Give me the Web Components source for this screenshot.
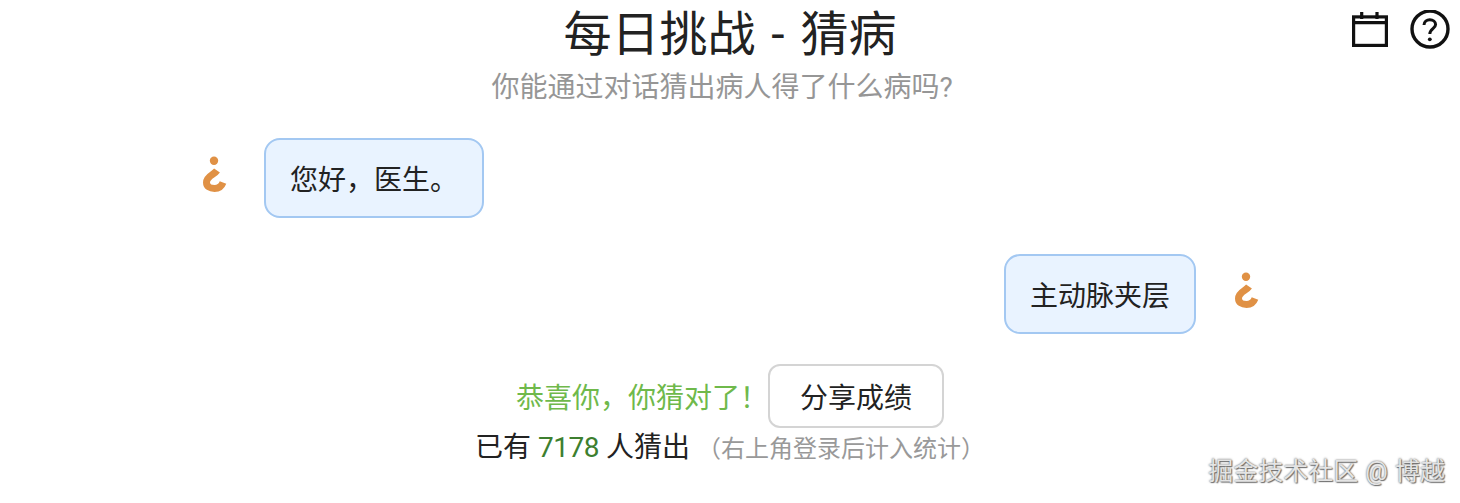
<!DOCTYPE html>
<html lang="zh">
<head>
<meta charset="utf-8">
<title>每日挑战 - 猜病</title>
<style>
html, body { margin: 0; padding: 0; background: #fff; }
body { font-family: Roboto, "Noto Sans CJK SC", sans-serif; color: #222; overflow: hidden; }
</style>
</head>
<body>
<guess-app></guess-app>

<script>
const HOOK = `<svg width="28" height="38" viewBox="0 0 28 38" fill="none">
  <circle cx="14" cy="5.7" r="4.2" fill="#e09145"/>
  <path d="M17 15.5C14 20 6.5 21 6.5 27.5C6.5 31.5 10 33.5 14.5 33.5C18.5 33.5 21.5 31.5 23 27.5" stroke="#e09145" stroke-width="7"/>
</svg>`;

class GuessHeader extends HTMLElement {
  constructor() {
    super();
    this.attachShadow({ mode: "open" });
    this.shadowRoot.innerHTML = `
<style>
:host { display: grid; grid-template-columns: 1fr auto 1fr; align-items: start; }
.titles { grid-column: 2; text-align: center; }
h1 { margin: 0; padding-top: 2px; font-size: 48px; line-height: 66px; font-weight: 400; color: #222; word-spacing: 4px; }
p { margin: 0; padding-right: 16px; font-size: 28px; line-height: 40px; color: #969696; }
.tools { grid-column: 3; justify-self: end; display: flex; align-items: flex-start; gap: 22px; padding: 10px 10px 0 0; }
svg { display: block; }
</style>
<div class="titles">
  <h1>每日挑战 - 猜病</h1>
  <p>你能通过对话猜出病人得了什么病吗?</p>
</div>
<div class="tools">
  <svg width="36" height="40" viewBox="0 0 36 40" fill="none" stroke="#111" stroke-width="3.2">
    <rect x="1.6" y="6.9" width="32.8" height="28.5"/>
    <path d="M1.6 12.6H34.4M9.7 2V9M25 2V9"/>
  </svg>
  <svg width="40" height="40" viewBox="0 0 40 40" fill="none" stroke="#111">
    <circle cx="20" cy="19" r="18" stroke-width="3.4"/>
    <path d="M14 15C14 11.5 16.8 9.7 19.8 9.7C23 9.7 25.6 11.8 25.6 14.6C25.6 18.6 19.8 19 19.8 24" stroke-width="3"/>
    <circle cx="19.8" cy="29.3" r="1.9" fill="#111" stroke="none"/>
  </svg>
</div>`;
  }
}

class ChatBubble extends HTMLElement {
  constructor() {
    super();
    this.attachShadow({ mode: "open" });
    this.shadowRoot.innerHTML = `
<style>
:host { display: flex; align-items: center; gap: 36px; }
:host([side="right"]) { flex-direction: row-reverse; }
.icon { width: 28px; height: 38px; margin-top: -8px; }
svg { display: block; }
.bubble { box-sizing: border-box; height: 80px; display: flex; align-items: center; padding: 0 24px; font-size: 28px; color: #222;
  background: #e9f3ff; border: 2px solid #a3c8f2; border-radius: 16px; }
</style>
<div class="icon">${HOOK}</div>
<div class="bubble"><slot></slot></div>`;
  }
}

class ResultPanel extends HTMLElement {
  constructor() {
    super();
    this.attachShadow({ mode: "open" });
    this.shadowRoot.innerHTML = `
<style>
:host { display: flex; flex-direction: column; align-items: center; }
.top { display: flex; align-items: center; gap: 0; }
.ok { font-size: 28px; color: #6fb94b; }
button { box-sizing: border-box; height: 64px; padding: 0 30px; font: inherit; font-size: 28px; color: #222;
  background: #fff; border: 2px solid #d4d4d4; border-radius: 12px; }
.stat { font-size: 28px; line-height: 40px; color: #222; }
.num { color: #3d7f2f; letter-spacing: -0.5px; }
.hint { font-size: 24px; color: #999; }
</style>
<div class="top"><span class="ok">恭喜你，你猜对了！</span><button>分享成绩</button></div>
<div class="stat">已有 <span class="num">7178</span> 人猜出 <span class="hint">（右上角登录后计入统计）</span></div>`;
  }
}

class GuessApp extends HTMLElement {
  constructor() {
    super();
    this.attachShadow({ mode: "open" });
    this.shadowRoot.innerHTML = `
<style>
:host { display: block; position: relative; height: 503px; }
.chat { display: flex; flex-direction: column; gap: 36px; padding: 30px 200px 0; margin-bottom: 30px; }
chat-bubble[side="left"] { align-self: flex-start; }
chat-bubble[side="right"] { align-self: flex-end; }
.mark { position: absolute; right: 15px; bottom: 17px; font-size: 25px; line-height: 28px; color: #e4e4e4;
  word-spacing: 1px; text-shadow: 0 0 2px #555, 1px 1px 1px #777; }
</style>
<guess-header></guess-header>
<div class="chat">
  <chat-bubble side="left">您好，医生。</chat-bubble>
  <chat-bubble side="right">主动脉夹层</chat-bubble>
</div>
<result-panel></result-panel>
<div class="mark">掘金技术社区 @ 博越</div>`;
  }
}

customElements.define("guess-header", GuessHeader);
customElements.define("chat-bubble", ChatBubble);
customElements.define("result-panel", ResultPanel);
customElements.define("guess-app", GuessApp);
</script>
</body>
</html>
